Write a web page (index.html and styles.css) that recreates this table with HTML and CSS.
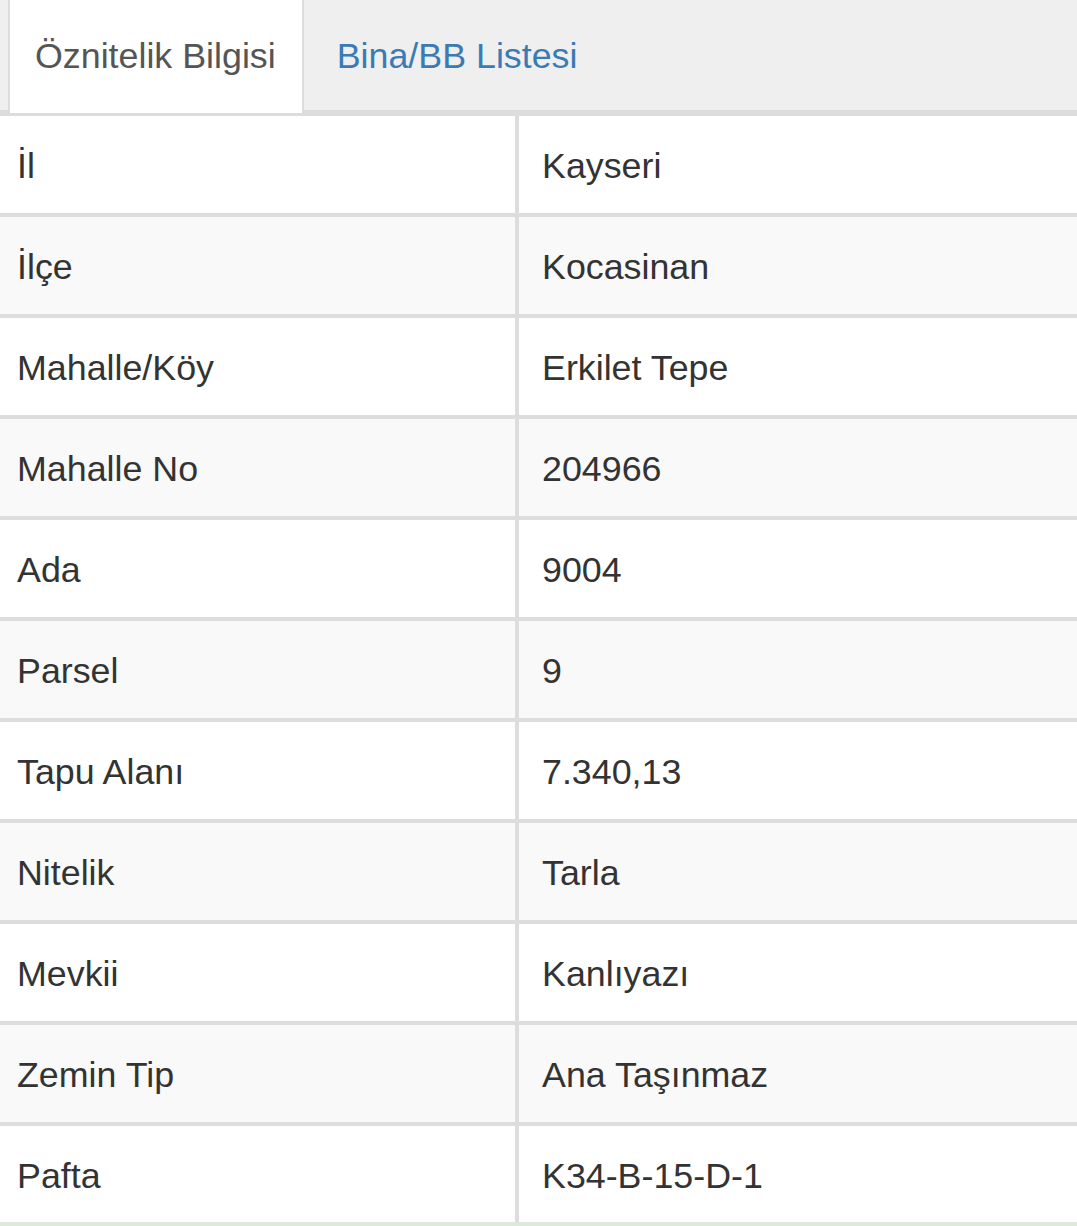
FILE: index.html
```html
<!DOCTYPE html>
<html lang="tr">
<head>
<meta charset="utf-8">
<title>Öznitelik Bilgisi</title>
<link rel="stylesheet" href="styles.css">
</head>
<body>
<div class="panel">
  <ul class="tabs">
    <li class="tab active"><span>Öznitelik Bilgisi</span></li>
    <li class="tab"><a href="#">Bina/BB Listesi</a></li>
  </ul>
  <table class="attrs">
    <tbody>
      <tr><td class="k">İl</td><td class="v">Kayseri</td></tr>
      <tr><td class="k">İlçe</td><td class="v">Kocasinan</td></tr>
      <tr><td class="k">Mahalle/Köy</td><td class="v">Erkilet Tepe</td></tr>
      <tr><td class="k">Mahalle No</td><td class="v">204966</td></tr>
      <tr><td class="k">Ada</td><td class="v">9004</td></tr>
      <tr><td class="k">Parsel</td><td class="v">9</td></tr>
      <tr><td class="k">Tapu Alanı</td><td class="v">7.340,13</td></tr>
      <tr><td class="k">Nitelik</td><td class="v">Tarla</td></tr>
      <tr><td class="k">Mevkii</td><td class="v">Kanlıyazı</td></tr>
      <tr><td class="k">Zemin Tip</td><td class="v">Ana Taşınmaz</td></tr>
      <tr><td class="k">Pafta</td><td class="v">K34-B-15-D-1</td></tr>
    </tbody>
  </table>
  <div class="foot"></div>
</div>
</body>
</html>
```

FILE: styles.css
```css
html, body {
  margin: 0;
  padding: 0;
  background: #ffffff;
}
body {
  font-family: "Liberation Sans", Arial, Helvetica, sans-serif;
  font-size: 35.8px;
  color: #333333;
}
.panel {
  width: 1077px;
}
.tabs {
  list-style: none;
  margin: 0;
  padding: 0 0 0 8px;
  display: flex;
  height: 110px;
  background: #efefef;
  border-bottom: 3px solid #dddddd;
}
.tab {
  display: flex;
  align-items: center;
  height: 110px;
  box-sizing: border-box;
  padding: 2px 26px 0 25px;
}
.tab.active {
  background: #ffffff;
  border-left: 2px solid #dddddd;
  border-right: 2px solid #dddddd;
  height: 113px;
  margin-bottom: -3px;
  padding-bottom: 3px;
  color: #555555;
}
.tab a {
  color: #3a7bb5;
  text-decoration: none;
  padding-left: 8px;
}
.attrs {
  width: 100%;
  border-collapse: separate;
  border-spacing: 0;
  border-top: 3px solid #dddddd;
}
.attrs tr:nth-child(even) td {
  background: #f9f9f9;
}
.attrs td {
  padding: 29.5px 0 26.5px;
  line-height: 41px;
  vertical-align: middle;
  border-bottom: 4px solid #dddddd;
}
.attrs tr:last-child td {
  border-bottom: none;
  padding-bottom: 25.5px;
}
.attrs td.k {
  width: 515px;
  padding-left: 17px;
  box-sizing: border-box;
}
.attrs td.v {
  border-left: 4px solid #dddddd;
  padding-left: 23px;
}
.foot {
  height: 6px;
  background: #dcebd9;
}
```
